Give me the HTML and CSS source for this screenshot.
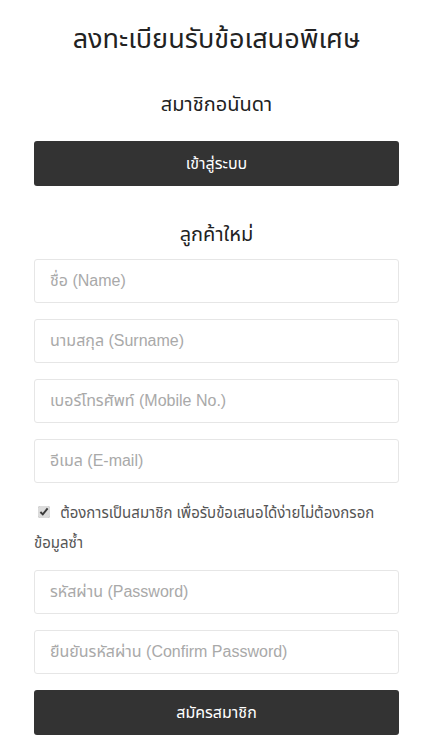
FILE: index.html
```html
<!DOCTYPE html>
<html lang="th">
<head>
<meta charset="utf-8">
<title>ลงทะเบียนรับข้อเสนอพิเศษ</title>
<link rel="stylesheet" href="styles.css">
</head>
<body>
<main class="page">
  <h1 class="title">ลงทะเบียนรับข้อเสนอพิเศษ</h1>
  <h2 class="subtitle member">สมาชิกอนันดา</h2>
  <button class="btn login" type="button">เข้าสู่ระบบ</button>
  <h2 class="subtitle newcust">ลูกค้าใหม่</h2>
  <form class="form">
    <input class="field" type="text" placeholder="ชื่อ (Name)">
    <input class="field" type="text" placeholder="นามสกุล (Surname)">
    <input class="field" type="text" placeholder="เบอร์โทรศัพท์ (Mobile No.)">
    <input class="field" type="text" placeholder="อีเมล (E-mail)">
    <label class="check"><input type="checkbox" checked> ต้องการเป็นสมาชิก เพื่อรับข้อเสนอได้ง่ายไม่ต้องกรอกข้อมูลซ้ำ</label>
    <input class="field" type="password" placeholder="รหัสผ่าน (Password)">
    <input class="field" type="password" placeholder="ยืนยันรหัสผ่าน (Confirm Password)">
    <button class="btn submit" type="button">สมัครสมาชิก</button>
  </form>
</main>
</body>
</html>
```
FILE: styles.css
```css
html, body {
  margin: 0;
  padding: 0;
  background: #fff;
}
body {
  font-family: "Liberation Sans", "Noto Sans Thai", sans-serif;
  color: #333;
}
.page {
  padding: 0 33px 0 34px;
  display: flex;
  flex-direction: column;
}
.title {
  margin: 22px 0 0;
  font-family: "Noto Sans Thai", "Noto Sans", sans-serif;
  font-weight: 400;
  font-size: 27px;
  line-height: 36px;
  text-align: center;
  color: #222;
}
.subtitle {
  margin: 0;
  font-family: "Noto Sans Thai", "Noto Sans", sans-serif;
  font-weight: 400;
  font-size: 20px;
  line-height: 28px;
  text-align: center;
  color: #222;
}
.member { margin-top: 33px; }
.newcust { margin-top: 35px; margin-bottom: 10px; }
.btn {
  display: block;
  width: 100%;
  height: 45px;
  margin-top: 22px;
  border: 0;
  border-radius: 3px;
  background: #333;
  color: #fff;
  font-family: "Liberation Sans", "Noto Sans Thai", sans-serif;
  font-size: 16px;
}
.form {
  display: flex;
  flex-direction: column;
  gap: 16px;
}
.field {
  box-sizing: border-box;
  height: 44px;
  width: 100%;
  margin: 0;
  padding: 0 15px;
  border: 1px solid #e6e6e6;
  border-radius: 3px;
  font-family: "Liberation Sans", "Noto Sans Thai", sans-serif;
  font-size: 16px;
  color: #555;
}
.field::placeholder { color: #a9a9a9; }
.check {
  font-size: 15px;
  line-height: 30px;
  color: #555;
  margin: -1px 0 -4px;
}
.check input {
  margin: 0 6px 0 4px;
  width: 12px;
  height: 12px;
  accent-color: #dcdcdc;
}
.submit { margin-top: 0; }
```
